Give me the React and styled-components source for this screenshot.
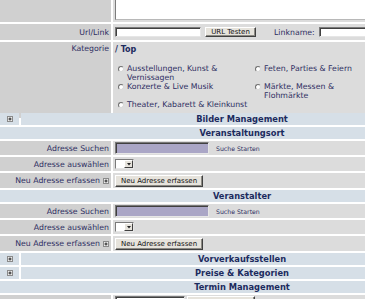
import React from "react";
import styled, { createGlobalStyle } from "styled-components";

const Global = createGlobalStyle`
  * {
    box-sizing: border-box;
  }
  body {
    margin: 0;
    background: #ffffff;
    overflow: hidden;
    font-family: "DejaVu Sans", Verdana, sans-serif;
  }
`;

const Sheet = styled.div`
  width: 484px;
  display: flex;
  flex-direction: column;
  gap: 2px;
  background: #ffffff;
`;

const Row = styled.div`
  display: grid;
  grid-template-columns: 111px 1fr;
  column-gap: 2px;
  height: ${(p) => p.$h}px;
`;

const Label = styled.div`
  background: #d0d0d0;
  color: #2e2e62;
  font-size: 7.8px;
  display: flex;
  justify-content: flex-end;
  align-items: ${(p) => (p.$top ? "flex-start" : "center")};
  padding: ${(p) => (p.$top ? "2px 2px 0 0" : "0 2px 0 0")};
  gap: 3px;
  white-space: nowrap;
`;

const Value = styled.div`
  background: #dcdcdc;
  padding-left: 2px;
  display: flex;
  align-items: center;
  overflow: hidden;
  white-space: nowrap;
`;

const TopValue = styled.div`
  background: #dcdcdc;
  padding-left: 2px;
  overflow: hidden;
`;

const TextArea = styled.div`
  height: 20px;
  background: #ffffff;
  border-left: 1px solid #7c7c7c;
  border-bottom: 1px solid #b8b8b8;
`;

const Input = styled.div`
  flex: none;
  width: ${(p) => p.$w}px;
  height: ${(p) => p.$h}px;
  background: ${(p) => p.$bg || "#ffffff"};
  border: 1px solid;
  border-color: #7a7a7a #e6e6e6 #e6e6e6 #7a7a7a;
  box-shadow: inset 1px 1px 0 #404040;
  margin-right: ${(p) => p.$mr || 0}px;
`;

const Button = styled.div`
  flex: none;
  width: ${(p) => (p.$w ? `${p.$w}px` : "auto")};
  height: ${(p) => p.$h}px;
  padding: 0 4px;
  display: flex;
  align-items: center;
  justify-content: center;
  background: #e6e3dc;
  border: 1px solid;
  border-color: #ffffff #404040 #404040 #ffffff;
  box-shadow: inset -1px -1px 0 #8c8a84;
  font-size: 7px;
  color: #111111;
`;

const InlineText = styled.span`
  font-size: ${(p) => p.$size || 7.8}px;
  color: #2e2e62;
  margin-left: ${(p) => p.$ml || 0}px;
  margin-right: ${(p) => p.$mr || 0}px;
`;

const Select = styled.div`
  display: flex;
  height: 10px;
  border: 1px solid;
  border-color: #7a7a7a #e6e6e6 #e6e6e6 #7a7a7a;
`;

const SelectBox = styled.div`
  width: 8px;
  background: #ffffff;
`;

const SelectArrow = styled.div`
  width: 9px;
  background: #e6e3dc;
  border: 1px solid;
  border-color: #ffffff #404040 #404040 #ffffff;
  display: flex;
  align-items: center;
  justify-content: center;
`;

const Category = styled.div`
  background: #dcdcdc;
  padding: 3px 0 0 5px;
  color: #2e2e62;
  font-size: 7.8px;
`;

const TopPath = styled.div`
  font-weight: bold;
  font-size: 8px;
  color: #1c2b5e;
  line-height: 10px;
  margin-left: -3px;
`;

const RadioGrid = styled.div`
  display: grid;
  grid-template-columns: 137px 150px;
  margin-top: 9px;
  line-height: 9px;
`;

const RadioItem = styled.div`
  display: flex;
  gap: 3px;
  min-height: 18px;
`;

const Radio = styled.span`
  flex: none;
  width: 6px;
  height: 6px;
  margin-top: 2px;
  border-radius: 50%;
  background: #ffffff;
  border: 1px solid;
  border-color: #707070 #d8d8d8 #d8d8d8 #707070;
`;

const RadioText = styled.span`
  width: ${(p) => p.$w}px;
  white-space: normal;
`;

const HeaderRow = styled.div`
  display: flex;
  gap: 2px;
  height: 12px;
`;

const PlusCell = styled.div`
  width: 19px;
  background: #d6dfe7;
  display: flex;
  align-items: center;
  justify-content: center;
`;

const Title = styled.div`
  flex: 1;
  background: #d6dfe7;
  text-align: center;
  font-weight: bold;
  font-size: 8.3px;
  line-height: 12px;
  color: #1c2b5e;
  padding-right: ${(p) => (p.$plus ? 21 : 0)}px;
`;

function PlusIcon() {
  return (
    <svg width="6" height="6" viewBox="0 0 6 6">
      <rect x="0.5" y="0.5" width="5" height="5" fill="#ececec" stroke="#8a8a8a" />
      <path d="M1.5 3h3M3 1.5v3" stroke="#222" strokeWidth="1" />
    </svg>
  );
}

function Header({ title, plus }) {
  return (
    <HeaderRow>
      {plus && (
        <PlusCell>
          <PlusIcon />
        </PlusCell>
      )}
      <Title $plus={plus}>{title}</Title>
    </HeaderRow>
  );
}

function AddressGroup({ title }) {
  return (
    <>
      <Header title={title} />
      <Row $h={14}>
        <Label>Adresse Suchen</Label>
        <Value>
          <Input $w={94} $h={12} $bg="#aaa6c6" />
          <InlineText $size={6.2} $ml={7}>Suche Starten</InlineText>
        </Value>
      </Row>
      <Row $h={14}>
        <Label>Adresse auswählen</Label>
        <Value>
          <Select>
            <SelectBox />
            <SelectArrow>
              <svg width="4" height="3" viewBox="0 0 4 3">
                <path d="M0 0h4L2 2.5z" fill="#222" />
              </svg>
            </SelectArrow>
          </Select>
        </Value>
      </Row>
      <Row $h={15}>
        <Label>
          Neu Adresse erfassen <PlusIcon />
        </Label>
        <Value>
          <Button $h={12} $w={88}>Neu Adresse erfassen</Button>
        </Value>
      </Row>
    </>
  );
}

const categories = [
  ["Ausstellungen, Kunst & Vernissagen", "Feten, Parties & Feiern"],
  ["Konzerte & Live Musik", "Märkte, Messen & Flohmärkte"],
  ["Theater, Kabarett & Kleinkunst", null],
];

export default function App() {
  return (
    <>
      <Global />
      <Sheet>
        <Row $h={22}>
          <Label />
          <TopValue>
            <TextArea />
          </TopValue>
        </Row>
        <Row $h={16}>
          <Label>Url/Link</Label>
          <Value>
            <Input $w={86} $h={10} $mr={4} />
            <Button $h={10} $w={51}>URL Testen</Button>
            <InlineText $ml={18} $mr={4}>Linkname:</InlineText>
            <Input $w={120} $h={10} />
          </Value>
        </Row>
        <Row $h={69}>
          <Label $top>Kategorie</Label>
          <Category>
            <TopPath>/ Top</TopPath>
            <RadioGrid>
              {categories.flat().map((c, i) =>
                c ? (
                  <RadioItem key={i}>
                    <Radio />
                    <RadioText $w={i % 2 ? 100 : 124}>{c}</RadioText>
                  </RadioItem>
                ) : (
                  <div key={i} />
                )
              )}
            </RadioGrid>
          </Category>
        </Row>
        <Header title="Bilder Management" plus />
        <AddressGroup title="Veranstaltungsort" />
        <AddressGroup title="Veranstalter" />
        <Header title="Vorverkaufsstellen" plus />
        <Header title="Preise & Kategorien" plus />
        <Header title="Termin Management" />
        <Row $h={14}>
          <Label />
          <Value>
            <Input $w={70} $h={12} $mr={2} />
            <Button $h={12} $w={68} />
          </Value>
        </Row>
      </Sheet>
    </>
  );
}
